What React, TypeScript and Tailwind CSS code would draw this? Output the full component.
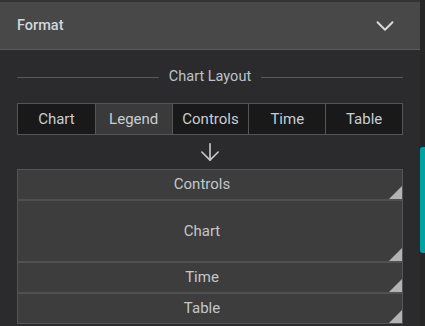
import React from 'react';
import { ChevronDown, ArrowDown } from 'lucide-react';

const tabs = ['Chart', 'Legend', 'Controls', 'Time', 'Table'];

const blocks = [
  { label: 'Controls', h: 'h-[29px]' },
  { label: 'Chart', h: 'h-[62px]' },
  { label: 'Time', h: 'h-[31px]' },
  { label: 'Table', h: 'h-[31px]' },
];

function Corner() {
  return (
    <svg className="absolute bottom-0 right-0" width="13" height="13" viewBox="0 0 13 13">
      <polygon points="13,0 13,13 0,13" fill="#b3b3b3" />
    </svg>
  );
}

export default function App() {
  return (
    <div
      className="flex h-[326px] w-[425px] overflow-hidden bg-[#2b2b2d]"
      style={{ fontFamily: 'Roboto, "Liberation Sans", sans-serif' }}
    >
      <div className="flex w-[420px] flex-col">
        <div className="flex h-[50px] items-center justify-between border-t-2 border-b border-t-[#333335] border-b-[#5a5a5a] bg-[#484848] pl-[17px] pr-[20px]">
          <span className="text-[14.5px] font-medium text-[#d2d8de]">Format</span>
          <ChevronDown className="h-[30px] w-[30px] text-[#dcdcdc]" strokeWidth={1.5} />
        </div>

        <div className="flex flex-col px-[17px]">
          <div className="mt-[17px] flex h-5 items-center gap-[10px]">
            <div className="h-px flex-1 bg-[#5a5a5a]" />
            <span className="text-[14.5px] text-[#bcc4cc]">Chart Layout</span>
            <div className="h-px flex-1 bg-[#5a5a5a]" />
          </div>

          <div className="mt-[16px] grid h-[32px] grid-cols-5 border border-[#555]">
            {tabs.map((t, i) => (
              <div
                key={t}
                className={`flex items-center justify-center text-[15px] text-[#c9cdd2] ${
                  i > 0 ? 'border-l border-[#555]' : ''
                } ${t === 'Legend' ? 'bg-[#3a3a3a]' : 'bg-[#19191a]'}`}
              >
                {t}
              </div>
            ))}
          </div>

          <div className="flex h-[34px] items-center justify-center">
            <ArrowDown className="h-7 w-7 text-[#c8c8c8]" strokeWidth={1.4} />
          </div>

          <div className="flex flex-col border border-[#555] bg-[#3d3d3d]">
            {blocks.map((b, i) => (
              <div
                key={b.label}
                className={`relative flex justify-center pr-4 ${b.h} ${i > 0 ? 'border-t-2 border-[#505050]' : ''}`}
              >
                <span className={`text-[15px] text-[#c3c7cc] ${b.label === 'Chart' ? 'self-center' : 'pt-[3px]'}`}>
                  {b.label}
                </span>
                <Corner />
              </div>
            ))}
          </div>
        </div>
      </div>
      <div className="w-[5px] bg-[#262627]">
        <div className="mt-[147px] h-[106px] rounded-l-[3px] bg-[#00a3a3]" />
      </div>
    </div>
  );
}
